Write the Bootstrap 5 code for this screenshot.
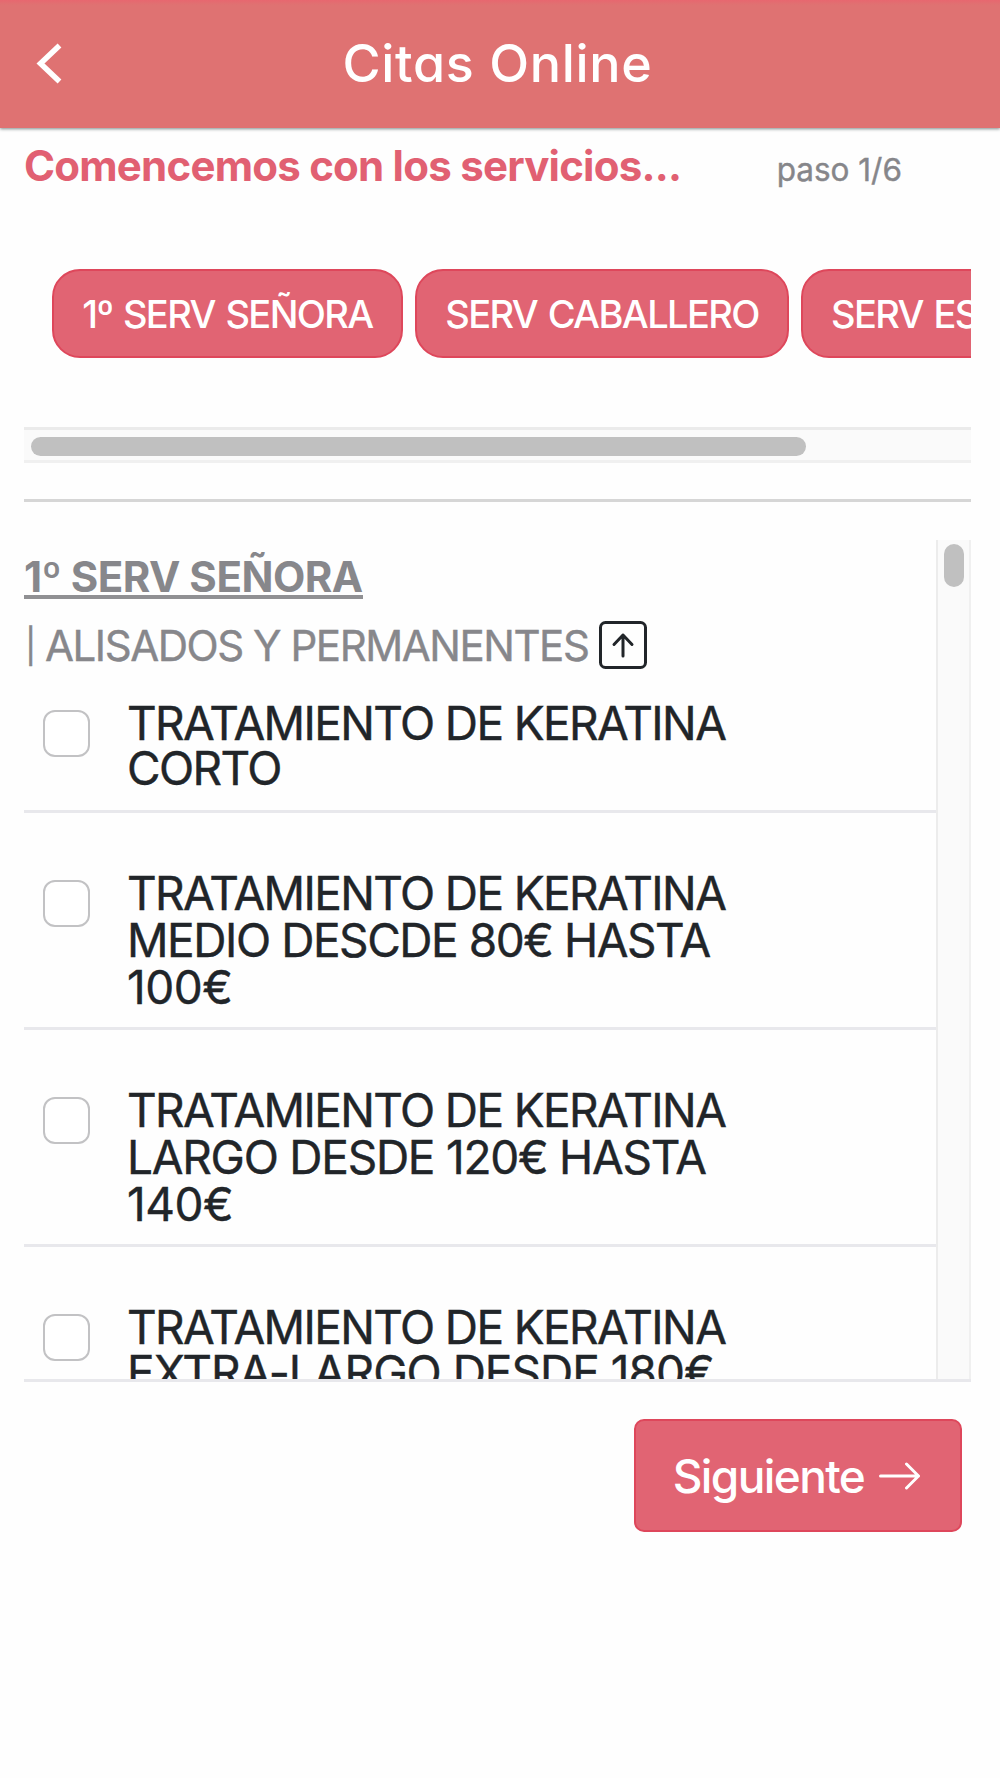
<!DOCTYPE html>
<html lang="es">
<head>
<meta charset="utf-8">
<meta name="viewport" content="width=device-width, initial-scale=1">
<title>Citas Online</title>
<link href="https://cdn.jsdelivr.net/npm/bootstrap@5.3.0/dist/css/bootstrap.min.css" rel="stylesheet">
<style>
body{font-family:Inter,"Liberation Sans",sans-serif;background:#fefefe;color:#212529;min-height:1778px;overflow:hidden}
.app-header{height:128px;background:linear-gradient(#e7676f 0,#df7272 5px);box-shadow:0 1px 3px rgba(60,80,80,.65);padding:0 5px 0 0}
.app-title{font-size:52px;line-height:50px;font-weight:500;letter-spacing:.7px;font-feature-settings:"cv11";margin:0}
.back-btn{left:36px;top:43px}
.content{padding:13px 29px 0 24px}
.steps{height:50px}
.step-title{font-size:42px;line-height:50px;font-weight:700;letter-spacing:-.77px;color:#e16072}
.step-count{font-size:31.5px;line-height:50px;color:#86868a;margin-right:69px;-webkit-text-stroke:.4px #86868a}
.chips{margin-top:78px;padding-left:28px;gap:12px}
.chip{height:89px;border-radius:28px;padding:1px 0 0;font-size:38px;line-height:38px;font-weight:500;letter-spacing:-1.6px;word-spacing:2px;flex:none}
.chip-m{width:351px}
.chip-l{width:374px}
.chip-clip{padding-left:28px;text-align:left}
.btn-rose{--bs-btn-color:#fff;--bs-btn-bg:#e16473;--bs-btn-border-color:#de475b;--bs-btn-border-width:2px}
.track-x{height:36px;margin-top:69px;background:#fafafa;border-top:3px solid #ebebeb;border-bottom:3px solid #f0f0f0;padding:6.5px 7px}
.thumb{background:#c0c0c0;border-radius:10px}
.thumb-x{height:19px;width:775px}
.rule{height:3px;background:#d6d6d6;margin-top:36px}
.service-box{height:842px;margin-top:38px;border-bottom:3px solid #e8e8ec}
.track-y{width:35px;flex:none;background:#fafafa;border-left:2px solid #ececec;border-right:2px solid #f0f0f0;padding:4px 6px}
.thumb-y{width:20px;height:43px}
.cat{font-size:42px;line-height:50px;height:50px;font-weight:700;letter-spacing:-.5px;color:#87878b;margin:12px 0 0}
.cat span{display:inline-block;height:47px;border-bottom:4px solid #909093}
.subcat{font-size:42px;line-height:50px;height:50px;color:#87878b;margin-top:18px;letter-spacing:-1.45px;-webkit-text-stroke:.4px #87878b}
.subcat span{padding-top:2px}
.subcat .bar{font-size:34px;width:21px;padding-left:1px}
.subcat svg{margin-left:11px}
.item{border-bottom:3px solid #e8e8ec;padding:57px 0 16px 19px}
.item-first{padding-top:31px;padding-bottom:19px}
.item-first .box{margin-top:9px}
.box{width:47px;height:47px;flex:none;border:2px solid #c2c2c4;border-radius:12px;background:#fff;margin-top:10px}
.label{font-size:46px;line-height:47px;letter-spacing:-1.62px;margin-left:37px;white-space:nowrap;-webkit-text-stroke:.4px #212529}
.tight{line-height:45px}
.fit-a{letter-spacing:-1.45px}
.fit-b{letter-spacing:-1.25px}
.fit-c{letter-spacing:-1px}
.fit-d{letter-spacing:-.5px}
.item-last{padding-top:58px}
.item-last .box{margin-top:9px}
.next{width:328px;height:113px;border-radius:10px;font-size:46px;line-height:46px;font-weight:500;letter-spacing:-1.6px;margin:37px 9px 0 0;padding:0 2px 0 0;gap:15px}
</style>
</head>
<body>
<header class="app-header position-relative d-flex align-items-center justify-content-center text-white">
<a class="back-btn position-absolute" href="#" aria-label="Volver"><svg width="28" height="42" viewBox="0 0 28 42" fill="none" stroke="#fff" stroke-width="5.500" class="d-block"><path d="M23.500 2.500L4.500 20.500L23.500 38.500"/></svg></a>
<h1 class="app-title">Citas Online</h1>
</header>
<main class="content">
<div class="steps d-flex justify-content-between align-items-baseline">
<div class="step-title">Comencemos con los servicios...</div>
<div class="step-count">paso 1/6</div>
</div>
<div class="chips d-flex overflow-hidden">
<button class="btn btn-rose chip chip-m">1º SERV SEÑORA</button>
<button class="btn btn-rose chip chip-l">SERV CABALLERO</button>
<button class="btn btn-rose chip chip-m chip-clip">SERV ES</button>
</div>
<div class="track-x"><div class="thumb thumb-x"></div></div>
<div class="rule"></div>
<section class="service-box d-flex overflow-hidden">
<div class="flex-grow-1">
<h2 class="cat"><span>1º SERV SEÑORA</span></h2>
<div class="subcat d-flex align-items-center"><span class="bar">|</span><span>ALISADOS Y PERMANENTES</span><svg width="48" height="48" viewBox="0 0 48 48" fill="none" stroke="#212529" stroke-width="3"><rect x="1.500" y="1.500" width="45" height="45" rx="5"/><path stroke-linecap="round" stroke-linejoin="round" d="M24 35V14M15 23.500L24 14L33 23.500"/></svg></div>
<div class="item item-first d-flex"><span class="box"></span><div class="label tight">TRATAMIENTO DE KERATINA<br>CORTO</div></div>
<div class="item d-flex"><span class="box"></span><div class="label">TRATAMIENTO DE KERATINA<br><span class="fit-a">MEDIO DESCDE 80€ HASTA</span><br><span class="fit-d">100€</span></div></div>
<div class="item d-flex"><span class="box"></span><div class="label">TRATAMIENTO DE KERATINA<br><span class="fit-b">LARGO DESDE 120€ HASTA</span><br><span class="fit-d">140€</span></div></div>
<div class="item item-last d-flex"><span class="box"></span><div class="label tight">TRATAMIENTO DE KERATINA<br><span class="fit-c">EXTRA-LARGO DESDE 180€</span></div></div>
</div>
<div class="track-y"><div class="thumb thumb-y"></div></div>
</section>
<div class="d-flex justify-content-end"><button class="btn btn-rose next d-flex align-items-center justify-content-center"><span>Siguiente</span><svg width="42" height="28" viewBox="0 0 42 28" fill="none" stroke="#fff" stroke-width="3" stroke-linecap="round" stroke-linejoin="round"><path d="M1.500 14H39.500M27.500 2L39.500 14L27.500 26"/></svg></button></div>
</main>
<script src="https://cdn.jsdelivr.net/npm/bootstrap@5.3.0/dist/js/bootstrap.bundle.min.js"></script>
</body>
</html>
